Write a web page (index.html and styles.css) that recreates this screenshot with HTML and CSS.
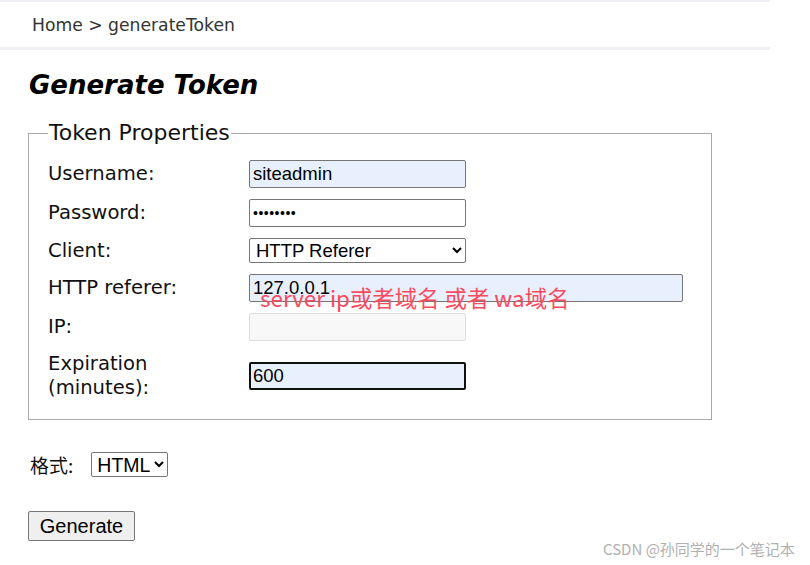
FILE: index.html
```html
<!DOCTYPE html>
<html lang="zh">
<head>
<meta charset="utf-8">
<title>generateToken</title>
<link rel="stylesheet" href="styles.css">
</head>
<body>
<div class="topbar">
  <div class="crumb">Home &gt; generateToken</div>
</div>
<main class="content">
  <h1 class="title">Generate Token</h1>
  <fieldset class="props">
    <legend class="legend">Token Properties</legend>
    <div class="grid">
      <label class="lbl">Username:</label>
      <div class="cell"><input class="field short autofill" type="text" value="siteadmin"></div>
      <label class="lbl">Password:</label>
      <div class="cell"><input class="field short pw" type="password" value="password"></div>
      <label class="lbl">Client:</label>
      <div class="cell"><select class="field short sel"><option>HTTP Referer</option></select></div>
      <label class="lbl">HTTP referer:</label>
      <div class="cell anno-wrap">
        <input class="field long autofill" type="text" value="127.0.0.1">
        <span class="anno">server ip或者域名 或者 wa域名</span>
      </div>
      <label class="lbl">IP:</label>
      <div class="cell"><input class="field short disabled" type="text" disabled></div>
      <label class="lbl">Expiration<br>(minutes):</label>
      <div class="cell"><input class="field short autofill focus" type="text" value="600"></div>
    </div>
  </fieldset>
  <div class="format">
    <span class="fmt-label">格式:</span>
    <select class="fmt-sel"><option>HTML</option></select>
  </div>
  <button class="gen" type="button">Generate</button>
</main>
<div class="watermark">CSDN @孙同学的一个笔记本</div>
</body>
</html>
```
FILE: styles.css
```css
html, body {
  margin: 0;
  padding: 0;
  background: #ffffff;
}
body {
  font-family: "DejaVu Sans", Verdana, sans-serif;
  color: #111;
  width: 810px;
  height: 565px;
  position: relative;
  overflow: hidden;
}
.topbar {
  width: 770px;
  height: 45px;
  border-top: 2px solid #eef0f6;
  border-bottom: 3px solid #f0f1f4;
  box-sizing: content-box;
  display: flex;
  align-items: center;
}
.crumb {
  padding-left: 32px;
  font-size: 17.2px;
  color: #333;
  margin-top: 0;
}
.content {
  padding-left: 28px;
}
.title {
  margin: 20px 0 0 1px;
  font-size: 26px;
  font-weight: bold;
  font-style: italic;
  line-height: 30px;
  color: #000;
}
.props {
  margin: 21px 0 0 0;
  width: 684px;
  box-sizing: border-box;
  border: 1px solid #a9a9a9;
  padding: 15px 0 19px 19px;
}
.legend {
  font-size: 22px;
  padding: 0 1px;
  color: #111;
  line-height: 24px;
}
.grid {
  display: grid;
  grid-template-columns: 201px auto;
  row-gap: 11px;
  align-items: center;
}
.lbl {
  font-size: 19.6px;
  line-height: 24px;
  color: #111;
}
.cell {
  display: flex;
  align-items: center;
}
.field {
  box-sizing: border-box;
  height: 28px;
  font-family: "Liberation Sans", Arial, sans-serif;
  font-size: 18.5px;
  color: #000;
  border: 1px solid #767676;
  border-radius: 2px;
  background: #fff;
  padding: 0 3px;
  margin: 0;
}
.short { width: 217px; }
.long { width: 434px; }
.autofill { background: #e8f0fe; }
.pw { font-size: 14px; letter-spacing: 0.5px; }
.sel {
  height: 25px;
  padding: 0 2px;
  background: #fff;
}
.disabled {
  background: #f8f8f8;
  border-color: #dedede;
}
.focus {
  border: 2px solid #101010;
  padding: 0 2px;
}
.anno-wrap {
  position: relative;
}
.anno {
  position: absolute;
  left: 11px;
  top: 10px;
  font-family: "Noto Sans CJK SC", "Liberation Sans", sans-serif;
  font-size: 22.4px;
  line-height: 26px;
  color: #fb4a5c;
  white-space: nowrap;
}
.format {
  display: flex;
  align-items: center;
  margin: 31px 0 0 2px;
  gap: 18px;
}
.fmt-label {
  font-family: "Noto Sans CJK SC", sans-serif;
  font-size: 19px;
  color: #111;
}
.fmt-sel {
  font-family: "Liberation Sans", Arial, sans-serif;
  font-size: 19.5px;
  height: 25px;
  width: 77px;
  border: 1px solid #767676;
  border-radius: 2px;
  background: #fff;
  color: #000;
  padding: 0 1px;
}
.gen {
  margin-top: 33px;
  font-family: "Liberation Sans", Arial, sans-serif;
  font-size: 20px;
  width: 107px;
  height: 30px;
  background: #efefef;
  border: 1px solid #767676;
  border-radius: 2px;
  color: #000;
  padding: 0;
}
.watermark {
  position: absolute;
  left: 603px;
  top: 538px;
  font-family: "Noto Sans CJK SC", "DejaVu Sans", sans-serif;
  font-size: 15px;
  color: #b0b0b0;
  white-space: nowrap;
}
```
